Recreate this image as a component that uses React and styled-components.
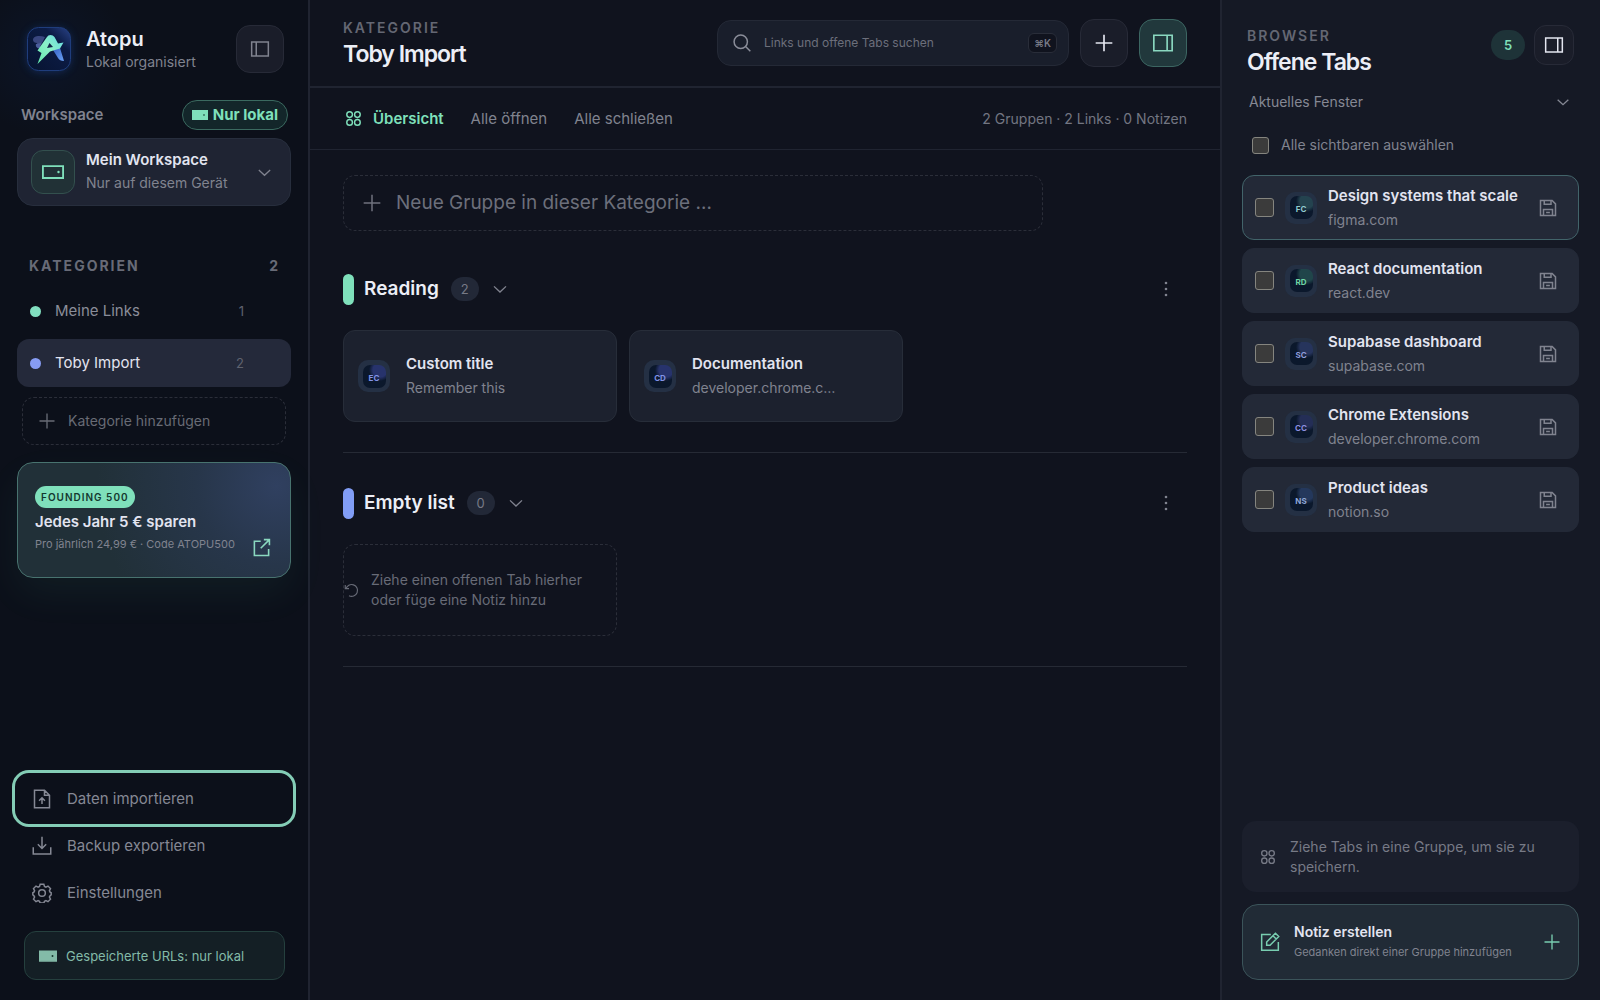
import { useState } from "react";
import styled, { createGlobalStyle } from "styled-components";

const GlobalStyle = createGlobalStyle`
    * {
        box-sizing: border-box;
    }

    body {
        margin: 0;
        background-color: #10131e;
        color: #eceef6;
        font-family: Inter, "Open Sans", "Liberation Sans", sans-serif;
        font-size: 15px;
        line-height: 20px;
    }

    button, input, select {
        font: inherit;
        color: inherit;
    }

    button {
        cursor: pointer;
        text-align: left;
    }

    h1, h2, h3, p, ul {
        margin: 0;
        padding: 0;
    }

    ul {
        list-style: none;
    }

    svg {
        display: block;
        flex: none;
    }
`

const Layout = styled.div`
    display: grid;
    grid-template-columns: 310px minmax(0, 1fr) 380px;
    min-height: 100vh;
`

const Sidebar = styled.aside`
    display: flex;
    flex-direction: column;
    padding: 25px 17px 20px;
    border-right: 2px solid #202431;
    background: radial-gradient(circle at 48px 56px, #0c1528 0, #0c101a 80px);
`

const Brand = styled.div`
    display: flex;
    align-items: center;
    padding: 0 7px 0 10px;
    gap: 15px;
`

const BrandText = styled.div`
    flex: 1;
`

const BrandName = styled.div`
    font-size: 20px;
    line-height: 26px;
    font-weight: 600;
`

const Muted = styled.div`
    font-size: ${(props) => props.$size || 14}px;
    line-height: ${(props) => props.$line || 24}px;
    color: #80838f;
    overflow: hidden;
    white-space: nowrap;
    text-overflow: ellipsis;
`

const IconButton = styled.button`
    display: flex;
    flex: none;
    align-items: center;
    justify-content: center;
    width: ${(props) => (props.$small ? 40 : 48)}px;
    height: ${(props) => (props.$small ? 40 : 48)}px;
    padding: 0;
    border: 1px solid ${(props) => (props.$active ? "#3c6662" : "#272a37")};
    border-radius: ${(props) => (props.$small ? 12 : 14)}px;
    background-color: ${(props) => (props.$active ? "#21383c" : "#1a1d29")};
    color: ${(props) => (props.$active ? "#8ad8c0" : props.$muted ? "#80838f" : "#e4e6f0")};
`

const WorkspaceHead = styled.div`
    display: flex;
    align-items: center;
    justify-content: space-between;
    margin-top: 27px;
    padding: 0 3px 0 4px;
    color: #80838f;
    font-size: 15px;
    font-weight: 600;
`

const LocalPill = styled.span`
    display: flex;
    align-items: center;
    gap: 5px;
    height: 30px;
    padding: 0 9px;
    border: 1px solid #3b6a60;
    border-radius: 15px;
    background-color: #13262a;
    color: #7fe0bb;
    font-size: 15px;
    font-weight: 700;
`

const WorkspaceCard = styled.button`
    display: flex;
    align-items: center;
    width: 100%;
    height: 68px;
    margin-top: 8px;
    padding: 0 17px 0 13px;
    gap: 11px;
    border: 1px solid #272e3d;
    border-radius: 16px;
    background-color: #1f2433;
    color: #80838f;
`

const WorkspaceIcon = styled.span`
    display: flex;
    align-items: center;
    justify-content: center;
    width: 44px;
    height: 44px;
    border: 1px solid #33504e;
    border-radius: 12px;
    background-color: #213136;
    color: #7fe0bb;
`

const Texts = styled.div`
    flex: 1;
    min-width: 0;
`

const Strong = styled.div`
    color: #e2e4f0;
    font-size: ${(props) => props.$size || 15}px;
    font-weight: 600;
    line-height: ${(props) => props.$line || 24}px;
    white-space: nowrap;
`

const SectionHead = styled.h2`
    display: flex;
    justify-content: space-between;
    margin-top: 50px;
    padding: 0 13px 0 12px;
    color: #686b77;
    font-size: 14px;
    line-height: 20px;
    font-weight: 700;
`

const Caps = styled.span`
    letter-spacing: 2px;
    text-transform: uppercase;
`

const CategoryList = styled.ul`
    display: flex;
    flex-direction: column;
    gap: 4px;
    margin-top: 11px;
`

const Category = styled.button`
    display: flex;
    align-items: center;
    width: 100%;
    height: 48px;
    padding: 0 47px 0 13px;
    gap: 14px;
    border: 0;
    border-radius: 12px;
    background-color: ${(props) => (props.$active ? "#24293a" : "transparent")};
    color: ${(props) => (props.$active ? "#e2e4f0" : "#8a8d99")};
    font-size: 15px;
`

const Dot = styled.span`
    width: 11px;
    height: 11px;
    border-radius: 50%;
    background-color: ${(props) => props.$color};
`

const CategoryName = styled.span`
    flex: 1;
`

const CategoryCount = styled.span`
    color: #5f626f;
    font-size: 13px;
`

const AddCategory = styled.button`
    display: flex;
    align-items: center;
    height: 48px;
    margin: 10px 5px 0;
    padding: 0 15px;
    gap: 12px;
    border: 1px dashed #2b2e39;
    border-radius: 12px;
    background: none;
    color: #686b75;
    font-size: 14px;
`

const Promo = styled.a`
    display: flex;
    align-items: flex-end;
    height: 116px;
    margin-top: 17px;
    padding: 0 19px 20px 17px;
    border: 1px solid #48736f;
    border-radius: 16px;
    background: radial-gradient(circle at 95% 20%, #304060 0, #27364a 80px, #213038 180px);
    box-shadow: 0 16px 40px rgba(110, 231, 190, 0.06);
    color: #8ad8c0;
    text-decoration: none;
`

const PromoText = styled(Texts)`
    padding-bottom: 3px;
`

const PromoBadge = styled.span`
    display: block;
    width: fit-content;
    margin-bottom: 2px;
    padding: 0 6px;
    border-radius: 11px;
    background-color: #7fe0bb;
    color: #14382f;
    font-size: 10px;
    font-weight: 600;
    line-height: 22px;
    letter-spacing: 1px;
`

const Menu = styled.nav`
    display: flex;
    flex-direction: column;
    margin-top: auto;
`

const MenuItem = styled.button`
    display: flex;
    align-items: center;
    height: 47px;
    padding: 0 15px;
    gap: 15px;
    border: 0;
    border-radius: 12px;
    background: none;
    color: #858894;
    font-size: 15px;
    ${(props) => props.$focused && `
        outline: 3px solid #84cdb6;
        outline-offset: 2px;
    `}
`

const LocalNote = styled.div`
    display: flex;
    align-items: center;
    height: 49px;
    margin: 15px 6px 0 7px;
    padding: 0 14px;
    gap: 9px;
    border: 1px solid #25403e;
    border-radius: 12px;
    background-color: #141f25;
    color: #83bba8;
    font-size: 13px;
`

const Main = styled.main`
    display: flex;
    flex-direction: column;
`

const Header = styled.header`
    display: flex;
    align-items: center;
    justify-content: space-between;
    height: 88px;
    padding: 0 33px;
    border-bottom: 2px solid #202431;
`

const Eyebrow = styled.div`
    color: #646773;
    font-size: 14px;
    font-weight: 600;
    line-height: 22px;
    letter-spacing: 2px;
`

const Title = styled.h1`
    font-size: 23px;
    font-weight: 600;
    line-height: 30px;
    letter-spacing: -1px;
`

const HeaderActions = styled.div`
    display: flex;
    align-items: center;
    gap: 11px;
`

const Search = styled.label`
    display: flex;
    align-items: center;
    width: 352px;
    height: 46px;
    padding: 0 11px 0 14px;
    gap: 12px;
    border: 1px solid #242936;
    border-radius: 14px;
    background-color: #191e2b;
    color: #8a8d99;
`

const TextField = styled.input`
    flex: 1;
    min-width: 0;
    padding: 0;
    border: 0;
    outline: 0;
    background: none;
    font-size: ${(props) => props.$size}px;

    &::placeholder {
        color: #6c6f7b;
        opacity: 1;
    }
`

const Kbd = styled.kbd`
    padding: 0 5px;
    border: 1px solid #292d39;
    border-radius: 6px;
    background-color: #10131e;
    color: #777a86;
    font-family: Inter, "DejaVu Sans", sans-serif;
    font-size: 10px;
    font-weight: 600;
    line-height: 18px;
`

const Toolbar = styled.div`
    display: flex;
    align-items: center;
    height: 62px;
    padding: 0 33px 0 35px;
    gap: 27px;
    border-bottom: 1px solid #202431;
    color: #737682;
    font-size: 14px;
`

const ToolbarButton = styled.button`
    display: flex;
    align-items: center;
    gap: 11px;
    padding: 0;
    border: 0;
    background: none;
    color: ${(props) => (props.$active ? "#7fe0bb" : "#80838f")};
    font-size: 15px;
    font-weight: ${(props) => (props.$active ? 600 : 400)};
`

const Stats = styled.span`
    margin-left: auto;
`

const Board = styled.div`
    padding: 25px 33px;
`

const NewGroup = styled.label`
    display: flex;
    align-items: center;
    max-width: 700px;
    height: 56px;
    padding: 0 18px;
    gap: 14px;
    border: 1px dashed #2b2e39;
    border-radius: 12px;
    color: #6f727e;
`

const Group = styled.section`
    margin-top: ${(props) => (props.$first ? 42 : 34)}px;
    padding-bottom: 30px;
    border-bottom: 1px solid #262a35;
`

const GroupHead = styled.div`
    display: flex;
    align-items: center;
    height: 32px;
    padding-right: 10px;
`

const GroupBar = styled.span`
    width: 11px;
    height: 31px;
    margin-right: 10px;
    border-radius: 6px;
    background-color: ${(props) => props.$color};
`

const GroupTitle = styled.h2`
    margin-right: 12px;
    font-size: 19px;
    font-weight: 600;
    line-height: 26px;
`

const GroupCount = styled.span`
    width: 28px;
    margin-right: 10px;
    border-radius: 12px;
    background-color: #222837;
    color: #777a86;
    font-size: 13px;
    line-height: 24px;
    text-align: center;
`

const PlainButton = styled.button`
    display: flex;
    padding: 2px;
    border: 0;
    background: none;
    color: #80838f;
    ${(props) => props.$end && "margin-left: auto;"}
`

const Cards = styled.div`
    display: grid;
    grid-template-columns: repeat(3, 274px);
    gap: 12px;
    margin-top: 25px;
`

const LinkCard = styled.a`
    display: flex;
    align-items: center;
    height: 92px;
    padding: 0 64px 0 14px;
    gap: 16px;
    border: 1px solid #272d39;
    border-radius: 12px;
    background-color: #1c212e;
    text-decoration: none;
`

const DropZone = styled.div`
    display: flex;
    align-items: center;
    height: 92px;
    gap: 12px;
    border: 1px dashed #2b2e39;
    border-radius: 12px;
    color: #686b77;
    font-size: 14px;
`

const Favicon = styled.span`
    display: flex;
    flex: none;
    align-items: center;
    justify-content: center;
    width: 32px;
    height: 32px;
    border-radius: 10px;
    background-color: #243044;
`

const FaviconInner = styled.span`
    width: 23px;
    height: 23px;
    border-radius: 7px;
    background: radial-gradient(circle at 17px 5px, ${(props) => props.$glow} 0, ${(props) => props.$glow} 7px, #0b182c 11px);
    color: ${(props) => props.$color};
    font-size: 8px;
    font-weight: 700;
    line-height: 26px;
    text-align: center;
`

const TabsPanel = styled.aside`
    display: flex;
    flex-direction: column;
    padding: 25px 21px 20px 20px;
    border-left: 2px solid #202431;
    background-color: #151925;
`

const PanelHead = styled.div`
    display: flex;
    align-items: flex-start;
    padding: 0 5px;
    gap: 9px;
`

const OpenCount = styled.span`
    width: 34px;
    margin: 5px 0 0 auto;
    border-radius: 15px;
    background-color: #1e3338;
    color: #7fe0bb;
    font-size: 13px;
    font-weight: 600;
    line-height: 30px;
    text-align: center;
`

const WindowPicker = styled.label`
    display: flex;
    align-items: center;
    height: 30px;
    margin-top: 10px;
    padding: 0 8px 0 7px;
    color: #858894;
`

const Select = styled.select`
    flex: 1;
    padding: 0;
    border: 0;
    appearance: none;
    background: none;
    font-size: 14px;
`

const SelectAll = styled.label`
    display: flex;
    align-items: center;
    height: 30px;
    margin-top: 13px;
    padding-left: 10px;
    gap: 12px;
    color: #80838f;
    font-size: 14px;
`

const Checkbox = styled.input.attrs({ type: "checkbox" })`
    flex: none;
    width: ${(props) => props.$size || 17}px;
    height: ${(props) => props.$size || 17}px;
    margin: 0;
    border: 1px solid #85857f;
    border-radius: 3px;
    appearance: none;
    background-color: #3b3b3b;

    &:checked {
        background-color: #7fe0bb;
    }
`

const TabList = styled.ul`
    display: flex;
    flex-direction: column;
    gap: 8px;
    margin-top: 15px;
`

const TabItem = styled.li`
    display: flex;
    align-items: center;
    height: 65px;
    padding: 0 19px 0 12px;
    gap: 11px;
    border: 1px solid ${(props) => (props.$active ? "#42646a" : "#232937")};
    border-radius: 12px;
    background-color: #232937;
`

const Hint = styled.p`
    display: flex;
    align-items: center;
    height: 71px;
    margin-top: auto;
    padding: 0 18px;
    gap: 14px;
    border-radius: 14px;
    background-color: #1b1f2c;
    color: #777a86;
    font-size: 14px;
`

const NoteButton = styled.button`
    display: flex;
    align-items: center;
    height: 76px;
    margin-top: 12px;
    padding: 0 17px;
    gap: 14px;
    border: 1px solid #3b545a;
    border-radius: 16px;
    background-color: #212b36;
    color: #78cdb0;
`

const paths = {
    chevron: "M4 8.5l8 7.5 8-7.5",
    plus: "M12 2v20M2 12h20",
    search: "M16.6 16.6L22 22M10.5 2.5a8 8 0 1 0 0 16 8 8 0 1 0 0-16z",
    sidebar: "M2 3.5h20v17H2zM7.5 3.5v17",
    panel: "M2 3.5h20v17H2zM16.5 3.5v17",
    clover: "M6.5 2.5a4 4 0 1 0 0 8 4 4 0 1 0 0-8zM17.5 2.5a4 4 0 1 0 0 8 4 4 0 1 0 0-8zM6.5 13.5a4 4 0 1 0 0 8 4 4 0 1 0 0-8zM17.5 13.5a4 4 0 1 0 0 8 4 4 0 1 0 0-8z",
    external: "M11 4H3v18h18v-8M15 2h7v7M22 2L11 13",
    importFile: "M3 1.5h12l6 6v15H3zM15 1.5v6h6M12 18v-7M8.5 14l3.5-3.5 3.5 3.5",
    download: "M1.5 13.5v8h21v-8M12 1v14M7 10l5 5 5-5",
    save: "M2 2h15.5L22 6.5V22H2zM6 22v-8h12v8M7 2v5h9V2M9.5 18h5",
    edit: "M13 3H2v19h20V12M8 16v-4L18.5 1.5l4 4L12 16zM15.5 4.5l4 4",
    undo: "M2 3v6h6M3 9.5A9.5 9.5 0 1 1 8 20.5",
    gear: "M9.8 1.5h4.400l.8 2.700 1.700.8 2.500-1.300 3 3-1.300 2.500.8 1.700 1.300.7v2.700l-1.300.9-.8 1.700 1.300 2.500-3 3-2.500-1.300-1.700.8-.8 2.200H9.800L9 21.900l-1.700-.8-2.500 1.300-3-3 1.300-2.500-.8-1.700-1.300-.9v-2.700l1.300-.7.8-1.700-1.300-2.500 3-3L7.300 5 9 4.200zM12 8a4 4 0 1 0 0 8 4 4 0 1 0 0-8z",
}

const Icon = ({ name, size = 20, stroke = 1.8 }) => (
    <svg width={size} height={size} viewBox="0 0 24 24" fill="none" stroke="currentColor" strokeWidth={stroke} aria-hidden="true">
        <path d={paths[name]} />
    </svg>
)

const DriveIcon = ({ size = 16, solid }) => (
    <svg width={size} height={size} viewBox="0 0 24 24" fill="none" stroke="currentColor" strokeWidth="2" aria-hidden="true">
        <path d="M1 5.5h22v13H1z" fill={solid ? "currentColor" : "none"} />
        <circle cx="18" cy="12" r="0.6" stroke={solid ? "#14382f" : "currentColor"} strokeWidth="1.4" />
    </svg>
)

const MoreIcon = () => (
    <svg width="18" height="18" viewBox="0 0 18 18" fill="currentColor" aria-hidden="true">
        <circle cx="9" cy="3" r="1.3" />
        <circle cx="9" cy="9" r="1.3" />
        <circle cx="9" cy="15" r="1.3" />
    </svg>
)

const LogoSvg = styled.svg`
    overflow: visible;
`

const Logo = () => (
    <LogoSvg width="44" height="44" viewBox="0 0 44 44" aria-hidden="true">
        <defs>
            <linearGradient id="tile" x1="0" y1="1" x2="1" y2="0">
                <stop offset="0" stopColor="#071330" />
                <stop offset="0.7" stopColor="#0c1c46" />
                <stop offset="1" stopColor="#2a4388" />
            </linearGradient>
            <linearGradient id="bolt" x1="0" y1="1" x2="1" y2="0">
                <stop offset="0" stopColor="#62e8ad" />
                <stop offset="0.5" stopColor="#8bf0c8" />
                <stop offset="1" stopColor="#63d9e6" />
            </linearGradient>
            <linearGradient id="leg" x1="0" y1="0" x2="1" y2="1">
                <stop offset="0" stopColor="#355fc2" />
                <stop offset="1" stopColor="#6aa2f5" />
            </linearGradient>
            <filter id="glow" x="-50%" y="-50%" width="200%" height="200%">
                <feGaussianBlur stdDeviation="5" />
            </filter>
        </defs>
        <rect x="1" y="2" width="42" height="42" rx="12" fill="#1b4aa0" opacity="0.5" filter="url(#glow)" />
        <rect x="0.5" y="0.5" width="43" height="43" rx="11" fill="url(#tile)" stroke="#1f3d7c" />
        <path d="M6 13c0-4 6-5 12-3l-4 8c-2 1-4 0-4-2-2 0-4-1-4-3z" fill="#39467f" />
        <path d="M9 17l5-1-1 5c-2 1-5-1-4-4z" fill="#4a5c9c" />
        <path d="M26 23l7-2 4 13c-3 0-5-1-6-3z" fill="url(#leg)" />
        <path d="M20 10Q21 8 23.5 8T27.500 10L31 16.500L36.500 15.500L33 21.500L23 24.500L10.500 37L14.500 26L10.500 23.500Z" fill="url(#bolt)" />
        <path d="M22.500 16l3.500 4-6 1z" fill="#102448" />
    </LogoSvg>
)

const categories = [
    { id: "links", name: "Meine Links", count: 1, color: "#82dfc0" },
    { id: "toby", name: "Toby Import", count: 2, color: "#879cf3" },
]

const links = [
    { title: "Custom title", sub: "Remember this", mark: "EC" },
    { title: "Documentation", sub: "developer.chrome.com", mark: "CD" },
]

const tabs = [
    { title: "Design systems that scale", url: "figma.com", mark: "FC", color: "#91cbd0", glow: "#24434f" },
    { title: "React documentation", url: "react.dev", mark: "RD", color: "#6fd6a6", glow: "#20454a" },
    { title: "Supabase dashboard", url: "supabase.com", mark: "SC", color: "#8f9ddb", glow: "#26345c" },
    { title: "Chrome Extensions", url: "developer.chrome.com", mark: "CC", color: "#8f8fe0", glow: "#242e56" },
    { title: "Product ideas", url: "notion.so", mark: "NS", color: "#8fa8d8", glow: "#24385c" },
]

const Site = ({ mark, color = "#8294e8", glow = "#27336c" }) => (
    <Favicon>
        <FaviconInner $color={color} $glow={glow}>{mark}</FaviconInner>
    </Favicon>
)

const GroupHeader = ({ title, count, color }) => (
    <GroupHead>
        <GroupBar $color={color} />
        <GroupTitle>{title}</GroupTitle>
        <GroupCount>{count}</GroupCount>
        <PlainButton aria-label="Gruppe einklappen"><Icon name="chevron" size={18} /></PlainButton>
        <PlainButton $end aria-label="Gruppenmenü"><MoreIcon /></PlainButton>
    </GroupHead>
)

const App = () => {
    const [active, setActive] = useState("toby");
    const [selected, setSelected] = useState([]);

    const toggle = (url) => {
        setSelected(selected.includes(url) ? selected.filter((item) => item !== url) : [...selected, url]);
    }

    const toggleAll = () => {
        setSelected(selected.length === tabs.length ? [] : tabs.map((tab) => tab.url));
    }

    return (
        <>
            <GlobalStyle />
            <Layout>
                <Sidebar>
                    <Brand>
                        <Logo />
                        <BrandText>
                            <BrandName>Atopu</BrandName>
                            <Muted $line={20}>Lokal organisiert</Muted>
                        </BrandText>
                        <IconButton $muted aria-label="Seitenleiste einklappen"><Icon name="sidebar" /></IconButton>
                    </Brand>
                    <WorkspaceHead>
                        Workspace
                        <LocalPill><DriveIcon solid />Nur lokal</LocalPill>
                    </WorkspaceHead>
                    <WorkspaceCard>
                        <WorkspaceIcon><DriveIcon size={22} /></WorkspaceIcon>
                        <Texts>
                            <Strong $line={22}>Mein Workspace</Strong>
                            <Muted>Nur auf diesem Gerät</Muted>
                        </Texts>
                        <Icon name="chevron" size={17} />
                    </WorkspaceCard>
                    <SectionHead><Caps>Kategorien</Caps><span>2</span></SectionHead>
                    <CategoryList>
                        {categories.map((category) => (
                            <li key={category.id}>
                                <Category $active={active === category.id} onClick={() => setActive(category.id)}>
                                    <Dot $color={category.color} />
                                    <CategoryName>{category.name}</CategoryName>
                                    <CategoryCount>{category.count}</CategoryCount>
                                </Category>
                            </li>
                        ))}
                    </CategoryList>
                    <AddCategory><Icon name="plus" size={18} />Kategorie hinzufügen</AddCategory>
                    <Promo href="#founding">
                        <PromoText>
                            <PromoBadge>FOUNDING 500</PromoBadge>
                            <Strong>Jedes Jahr 5 € sparen</Strong>
                            <Muted $size={11} $line={20}>Pro jährlich 24,99 € · Code ATOPU500</Muted>
                        </PromoText>
                        <Icon name="external" size={19} stroke={2} />
                    </Promo>
                    <Menu>
                        <MenuItem $focused><Icon name="importFile" />Daten importieren</MenuItem>
                        <MenuItem><Icon name="download" />Backup exportieren</MenuItem>
                        <MenuItem><Icon name="gear" />Einstellungen</MenuItem>
                    </Menu>
                    <LocalNote><DriveIcon size={18} solid />Gespeicherte URLs: nur lokal</LocalNote>
                </Sidebar>

                <Main>
                    <Header>
                        <div>
                            <Eyebrow>KATEGORIE</Eyebrow>
                            <Title>Toby Import</Title>
                        </div>
                        <HeaderActions>
                            <Search>
                                <Icon name="search" />
                                <TextField $size={12} type="text" placeholder="Links und offene Tabs suchen" aria-label="Links und offene Tabs suchen" />
                                <Kbd>⌘K</Kbd>
                            </Search>
                            <IconButton aria-label="Hinzufügen"><Icon name="plus" stroke={2} /></IconButton>
                            <IconButton $active aria-label="Offene Tabs anzeigen"><Icon name="panel" size={22} /></IconButton>
                        </HeaderActions>
                    </Header>
                    <Toolbar>
                        <ToolbarButton $active><Icon name="clover" size={17} stroke={2} />Übersicht</ToolbarButton>
                        <ToolbarButton>Alle öffnen</ToolbarButton>
                        <ToolbarButton>Alle schließen</ToolbarButton>
                        <Stats>2 Gruppen · 2 Links · 0 Notizen</Stats>
                    </Toolbar>
                    <Board>
                        <NewGroup>
                            <Icon name="plus" size={20} />
                            <TextField $size={19} type="text" placeholder="Neue Gruppe in dieser Kategorie …" aria-label="Neue Gruppe" />
                        </NewGroup>
                        <Group $first>
                            <GroupHeader title="Reading" count={2} color="#7fe0bb" />
                            <Cards>
                                {links.map((link) => (
                                    <LinkCard key={link.title} href="#link">
                                        <Site mark={link.mark} />
                                        <Texts>
                                            <Strong>{link.title}</Strong>
                                            <Muted>{link.sub}</Muted>
                                        </Texts>
                                    </LinkCard>
                                ))}
                            </Cards>
                        </Group>
                        <Group>
                            <GroupHeader title="Empty list" count={0} color="#819df6" />
                            <Cards>
                                <DropZone>
                                    <Icon name="undo" size={15} />
                                    <span>Ziehe einen offenen Tab hierher oder füge eine Notiz hinzu</span>
                                </DropZone>
                            </Cards>
                        </Group>
                    </Board>
                </Main>

                <TabsPanel>
                    <PanelHead>
                        <div>
                            <Eyebrow>BROWSER</Eyebrow>
                            <Title as="h2">Offene Tabs</Title>
                        </div>
                        <OpenCount>5</OpenCount>
                        <IconButton $small aria-label="Leiste schließen"><Icon name="panel" /></IconButton>
                    </PanelHead>
                    <WindowPicker>
                        <Select aria-label="Fenster">
                            <option>Aktuelles Fenster</option>
                        </Select>
                        <Icon name="chevron" size={16} stroke={2} />
                    </WindowPicker>
                    <SelectAll>
                        <Checkbox checked={selected.length === tabs.length} onChange={toggleAll} />
                        Alle sichtbaren auswählen
                    </SelectAll>
                    <TabList>
                        {tabs.map((tab, index) => (
                            <TabItem key={tab.url} $active={index === 0}>
                                <Checkbox $size={19} aria-label={tab.title} checked={selected.includes(tab.url)} onChange={() => toggle(tab.url)} />
                                <Site mark={tab.mark} color={tab.color} glow={tab.glow} />
                                <Texts>
                                    <Strong>{tab.title}</Strong>
                                    <Muted>{tab.url}</Muted>
                                </Texts>
                                <PlainButton aria-label="Tab speichern"><Icon name="save" size={18} stroke={2} /></PlainButton>
                            </TabItem>
                        ))}
                    </TabList>
                    <Hint>
                        <Icon name="clover" size={16} stroke={2} />
                        Ziehe Tabs in eine Gruppe, um sie zu speichern.
                    </Hint>
                    <NoteButton>
                        <Icon name="edit" />
                        <Texts>
                            <Strong $size={14} $line={20}>Notiz erstellen</Strong>
                            <Muted $size={11} $line={20}>Gedanken direkt einer Gruppe hinzufügen</Muted>
                        </Texts>
                        <Icon name="plus" size={18} />
                    </NoteButton>
                </TabsPanel>
            </Layout>
        </>
    );
}

export default App;
